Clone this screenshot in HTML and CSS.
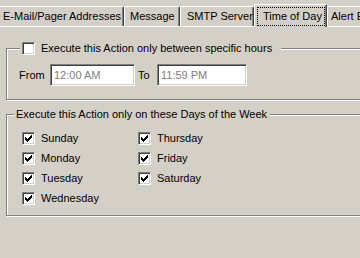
FILE: index.html
```html
<!DOCTYPE html>
<html lang="en">
<head>
    <meta charset="UTF-8">
    <meta name="viewport" content="width=device-width, initial-scale=1.0">
    <title>Time of Day</title>
    <link rel="stylesheet" href="styles.css">
</head>
<body>
    <div class="tabs">
        <div class="tab tab-email">E-Mail/Pager Addresses</div>
        <div class="tab tab-message">Message</div>
        <div class="tab tab-smtp">SMTP Server</div>
        <div class="tab tab-active"><span class="focus">Time of Day</span></div>
        <div class="tab tab-alert">Alert E</div>
    </div>

    <div class="panel">
        <div class="group group-hours">
            <div class="legend legend-check">
                <span class="check"></span>
                <span>Execute this Action only between specific hours</span>
            </div>
            <div class="time-row">
                <span class="lbl lbl-from">From</span>
                <span class="field field-from">12:00 AM</span>
                <span class="lbl lbl-to">To</span>
                <span class="field field-to">11:59 PM</span>
            </div>
        </div>

        <div class="group group-days">
            <div class="legend legend-text">Execute this Action only on these Days of the Week</div>
            <div class="days">
                <label class="day"><span class="check checked"><svg width="7" height="7" viewBox="0 0 7 7"><polygon points="6,0 7,0 7,3 6,3 6,4 5,4 5,5 4,5 4,6 3,6 3,7 2,7 2,6 1,6 1,5 0,5 0,2 1,2 1,3 2,3 2,4 3,4 3,3 4,3 4,2 5,2 5,1 6,1"/></svg></span>Sunday</label>
                <label class="day"><span class="check checked"><svg width="7" height="7" viewBox="0 0 7 7"><polygon points="6,0 7,0 7,3 6,3 6,4 5,4 5,5 4,5 4,6 3,6 3,7 2,7 2,6 1,6 1,5 0,5 0,2 1,2 1,3 2,3 2,4 3,4 3,3 4,3 4,2 5,2 5,1 6,1"/></svg></span>Monday</label>
                <label class="day"><span class="check checked"><svg width="7" height="7" viewBox="0 0 7 7"><polygon points="6,0 7,0 7,3 6,3 6,4 5,4 5,5 4,5 4,6 3,6 3,7 2,7 2,6 1,6 1,5 0,5 0,2 1,2 1,3 2,3 2,4 3,4 3,3 4,3 4,2 5,2 5,1 6,1"/></svg></span>Tuesday</label>
                <label class="day"><span class="check checked"><svg width="7" height="7" viewBox="0 0 7 7"><polygon points="6,0 7,0 7,3 6,3 6,4 5,4 5,5 4,5 4,6 3,6 3,7 2,7 2,6 1,6 1,5 0,5 0,2 1,2 1,3 2,3 2,4 3,4 3,3 4,3 4,2 5,2 5,1 6,1"/></svg></span>Wednesday</label>
                <label class="day"><span class="check checked"><svg width="7" height="7" viewBox="0 0 7 7"><polygon points="6,0 7,0 7,3 6,3 6,4 5,4 5,5 4,5 4,6 3,6 3,7 2,7 2,6 1,6 1,5 0,5 0,2 1,2 1,3 2,3 2,4 3,4 3,3 4,3 4,2 5,2 5,1 6,1"/></svg></span>Thursday</label>
                <label class="day"><span class="check checked"><svg width="7" height="7" viewBox="0 0 7 7"><polygon points="6,0 7,0 7,3 6,3 6,4 5,4 5,5 4,5 4,6 3,6 3,7 2,7 2,6 1,6 1,5 0,5 0,2 1,2 1,3 2,3 2,4 3,4 3,3 4,3 4,2 5,2 5,1 6,1"/></svg></span>Friday</label>
                <label class="day"><span class="check checked"><svg width="7" height="7" viewBox="0 0 7 7"><polygon points="6,0 7,0 7,3 6,3 6,4 5,4 5,5 4,5 4,6 3,6 3,7 2,7 2,6 1,6 1,5 0,5 0,2 1,2 1,3 2,3 2,4 3,4 3,3 4,3 4,2 5,2 5,1 6,1"/></svg></span>Saturday</label>
            </div>
        </div>
    </div>
</body>
</html>
```

FILE: styles.css
```css
html, body {
    margin: 0;
    height: 100%;
    overflow: hidden;
}
body {
    background-color: #d4d0c8;
    font-family: "Liberation Sans", Arial, sans-serif;
    font-size: 11px;
    line-height: 13px;
    color: #000;
}

/* tab strip */
.tabs {
    display: flex;
    align-items: flex-end;
    height: 26px;
    margin-left: -2px;
    white-space: nowrap;
}
.tab {
    box-sizing: border-box;
    height: 20px;
    padding-top: 3px;
    border-top: 1px solid #fff;
    border-left: 1px solid #fff;
    border-right: 1px solid #404040;
    border-radius: 2px 2px 0 0;
    box-shadow: inset -1px 0 #808080;
    flex-shrink: 0;
}
.tab-email {
    width: 126px;
    padding-left: 4px;
}
.tab-message {
    width: 56px;
    padding-left: 5px;
}
.tab-smtp {
    width: 74px;
    padding-left: 6px;
}
.tab-active {
    position: relative;
    z-index: 1;
    width: 73px;
    height: 23px;
    margin-bottom: -1px;
    padding: 2px 0 0 2px;
    background-color: #d4d0c8;
}
.focus {
    display: block;
    box-sizing: border-box;
    width: 68px;
    height: 19px;
    padding: 2px 0 0 5px;
    border: 1px dotted #000;
}
.tab-alert {
    width: 60px;
    padding-left: 3px;
}

/* page panel */
.panel {
    border-top: 1px solid #fff;
    padding-left: 6px;
}

.group {
    box-sizing: border-box;
    width: 420px;
    border: 1px solid #808080;
    box-shadow: inset 1px 1px #fff, 1px 1px #fff;
}
.group-hours {
    height: 52px;
    margin-top: 21px;
}
.group-days {
    height: 102px;
    margin-top: 14px;
}

.legend {
    width: fit-content;
    height: 13px;
    margin-top: -7px;
    background-color: #d4d0c8;
    white-space: nowrap;
}
.legend-check {
    display: flex;
    align-items: center;
    gap: 6px;
    margin-left: 13px;
    padding: 0 9px 0 2px;
}
.legend-text {
    margin-left: 7px;
    padding: 0 3px 0 2px;
}

/* sunken checkbox */
.check {
    box-sizing: border-box;
    display: flex;
    align-items: center;
    justify-content: center;
    width: 13px;
    height: 13px;
    flex-shrink: 0;
    background-color: #fff;
    border-top: 1px solid #808080;
    border-left: 1px solid #808080;
    border-right: 1px solid #fff;
    border-bottom: 1px solid #fff;
    box-shadow: inset 1px 1px #404040, inset -1px -1px #d4d0c8;
}
.check svg {
    display: block;
    shape-rendering: crispEdges;
}

/* time range */
.time-row {
    display: flex;
    align-items: center;
    margin-top: 9px;
    padding-left: 12px;
}
.lbl-from {
    width: 31px;
}
.lbl-to {
    width: 19px;
    margin-left: 3px;
}
.field {
    box-sizing: border-box;
    height: 22px;
    padding: 4px 0 0 3px;
    background-color: #fff;
    color: #808080;
    border-top: 1px solid #808080;
    border-left: 1px solid #808080;
    border-right: 1px solid #fff;
    border-bottom: 1px solid #fff;
    box-shadow: inset 1px 1px #404040, inset -1px -1px #d4d0c8;
}
.field-from {
    width: 85px;
}
.field-to {
    width: 90px;
}

/* days of week */
.days {
    display: grid;
    grid-template-columns: 116px 116px;
    grid-template-rows: repeat(4, 13px);
    grid-auto-flow: column;
    row-gap: 7px;
    margin: 11px 0 0 15px;
}
.day {
    display: flex;
    align-items: center;
    gap: 6px;
    white-space: nowrap;
}
```
